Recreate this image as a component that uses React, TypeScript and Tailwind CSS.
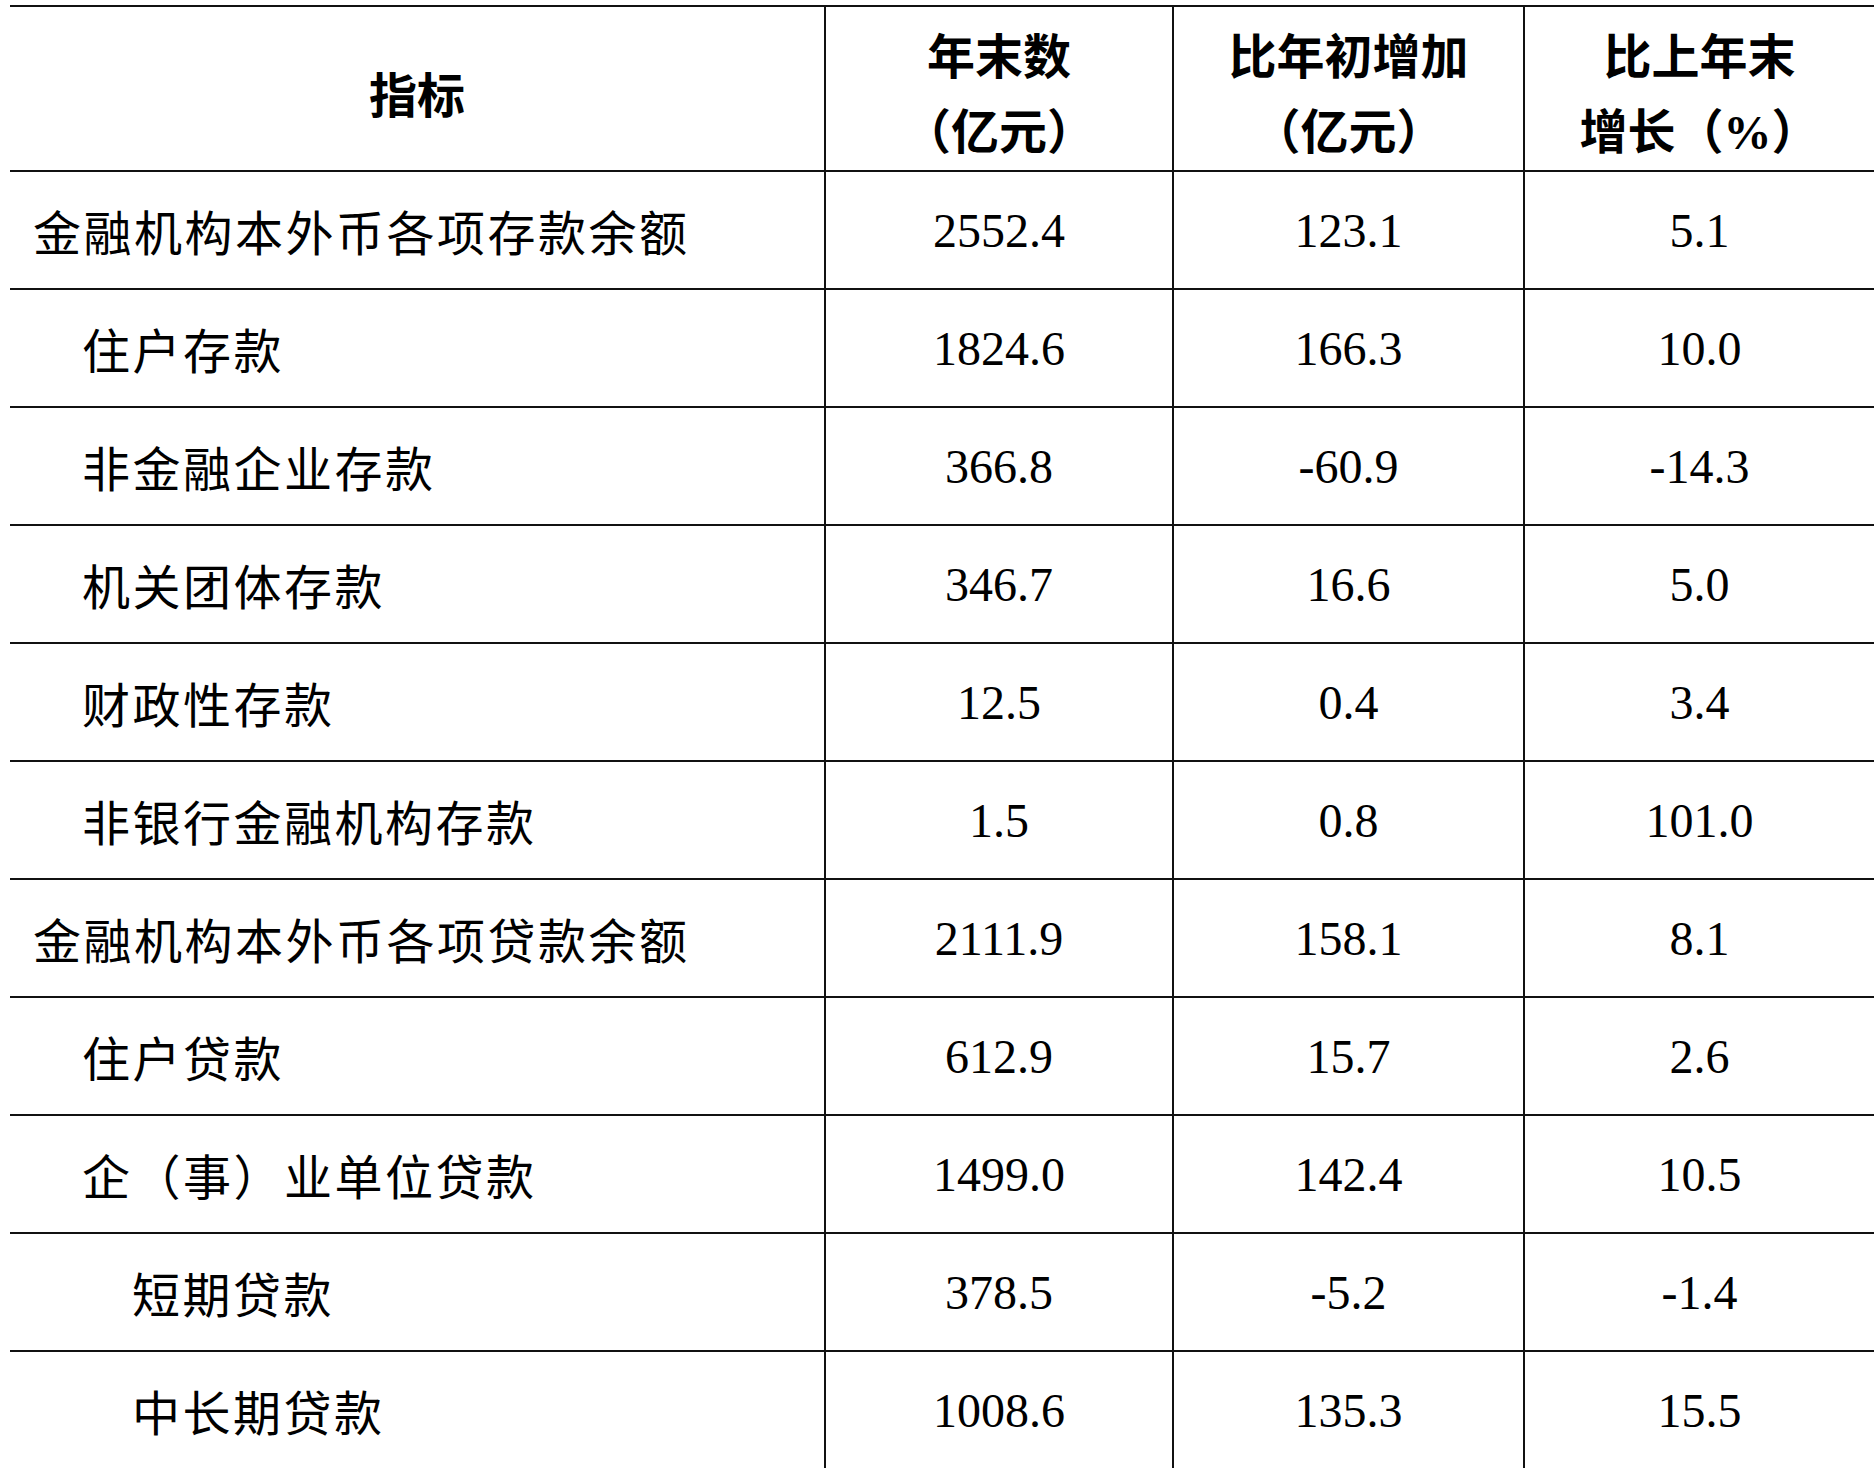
import React from 'react';

type Row = { name: string; level: 0 | 1 | 2; a: string; b: string; c: string };

const rows: Row[] = [
  { name: '金融机构本外币各项存款余额', level: 0, a: '2552.4', b: '123.1', c: '5.1' },
  { name: '住户存款', level: 1, a: '1824.6', b: '166.3', c: '10.0' },
  { name: '非金融企业存款', level: 1, a: '366.8', b: '-60.9', c: '-14.3' },
  { name: '机关团体存款', level: 1, a: '346.7', b: '16.6', c: '5.0' },
  { name: '财政性存款', level: 1, a: '12.5', b: '0.4', c: '3.4' },
  { name: '非银行金融机构存款', level: 1, a: '1.5', b: '0.8', c: '101.0' },
  { name: '金融机构本外币各项贷款余额', level: 0, a: '2111.9', b: '158.1', c: '8.1' },
  { name: '住户贷款', level: 1, a: '612.9', b: '15.7', c: '2.6' },
  { name: '企（事）业单位贷款', level: 1, a: '1499.0', b: '142.4', c: '10.5' },
  { name: '短期贷款', level: 2, a: '378.5', b: '-5.2', c: '-1.4' },
  { name: '中长期贷款', level: 2, a: '1008.6', b: '135.3', c: '15.5' },
];

const indent = ['pl-[23px]', 'pl-[72px]', 'pl-[122px]'];

export default function App() {
  return (
    <div className="w-[1875px] h-[1468px] overflow-hidden bg-white pt-[5px] pl-[10px]">
      <table className="w-[1864px] table-fixed border-collapse text-black font-['Liberation_Serif','Noto_Sans_CJK_SC',serif] text-[48px]">
        <colgroup>
          <col className="w-[815px]" />
          <col className="w-[348px]" />
          <col className="w-[351px]" />
          <col className="w-[350px]" />
        </colgroup>
        <thead>
          <tr className="h-[165px]">
            <th className="border-2 border-l-0 border-[#111] font-bold text-center leading-[76px] pt-[16px]">指标</th>
            <th className="border-2 border-[#111] font-bold text-center align-top leading-[75px] pt-[13px]">
              年末数
              <br />
              （亿元）
            </th>
            <th className="border-2 border-[#111] font-bold text-center align-top leading-[75px] pt-[13px]">
              比年初增加
              <br />
              （亿元）
            </th>
            <th className="border-2 border-r-0 border-[#111] font-bold text-center align-top leading-[75px] pt-[13px]">
              比上年末
              <br />
              增长（%）
            </th>
          </tr>
        </thead>
        <tbody>
          {rows.map((r, i) => (
            <tr key={i} className="h-[118px]">
              <td className={`border-2 border-l-0 border-[#111] ${indent[r.level]} pt-[10px] whitespace-nowrap tracking-[2.5px]`}>
                {r.name}
              </td>
              <td className="border-2 border-[#111] text-center pt-[2px]">{r.a}</td>
              <td className="border-2 border-[#111] text-center pt-[2px]">{r.b}</td>
              <td className="border-2 border-r-0 border-[#111] text-center pt-[2px]">{r.c}</td>
            </tr>
          ))}
        </tbody>
      </table>
    </div>
  );
}
